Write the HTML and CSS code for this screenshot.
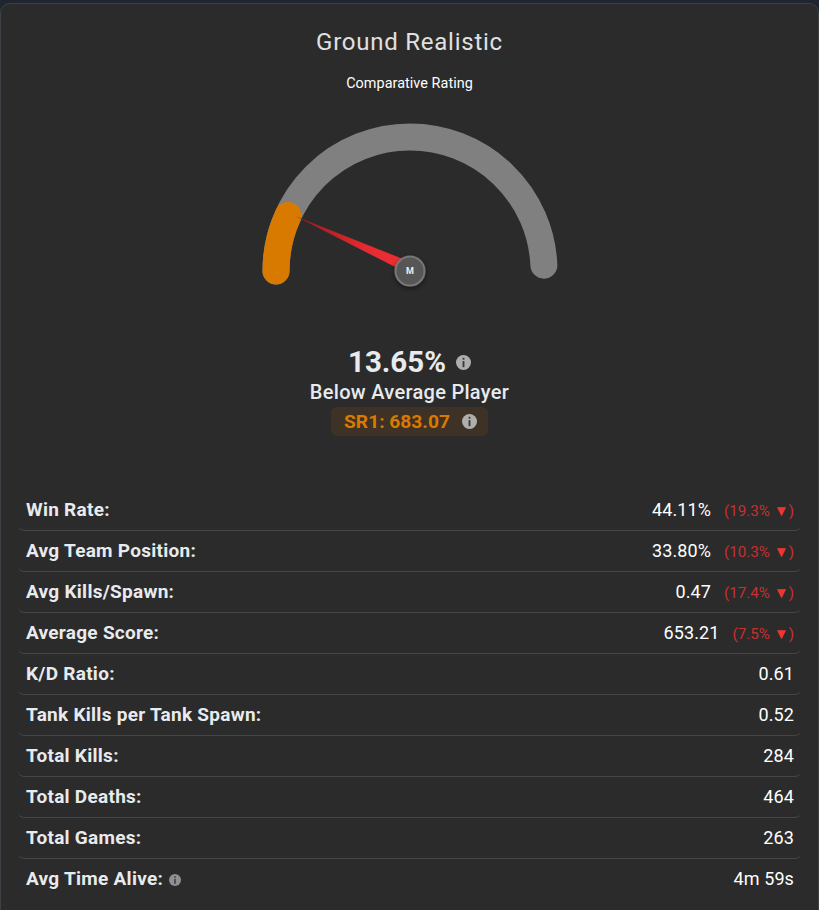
FILE: index.html
```html
<!DOCTYPE html>
<html lang="en">
<head>
    <meta charset="UTF-8">
    <meta name="viewport" content="width=device-width, initial-scale=1.0">
    <title>Ground Realistic</title>
    <link rel="stylesheet" href="styles.css">
</head>
<body>

<div class="card">
    <h2 class="title">Ground Realistic</h2>
    <div class="subtitle">Comparative Rating</div>

    <svg class="gauge" width="320" height="180" viewBox="250 115 320 180">
        <defs>
            <linearGradient id="needleFill" gradientUnits="userSpaceOnUse" x1="295" y1="216" x2="410" y2="271">
                <stop offset="0" stop-color="#8f1a1c"/>
                <stop offset="0.6" stop-color="#e52a30"/>
                <stop offset="1" stop-color="#f03035"/>
            </linearGradient>
            <filter id="hubShadow" x="-50%" y="-50%" width="200%" height="200%">
                <feDropShadow dx="0" dy="2" stdDeviation="2.5" flood-color="#000" flood-opacity="0.5"/>
            </filter>
        </defs>
        <path class="track" d="M276 271 A134 134 0 0 1 410 137 A134 134 0 0 1 543.87 265.15"/>
        <path class="value" d="M276 271 A134 134 0 0 1 288 215.5"/>
        <polygon fill="url(#needleFill)" points="295,216 413,263 406,272.5"/>
        <circle class="hub" cx="410" cy="271" r="14.5" filter="url(#hubShadow)"/>
        <text class="hub-label" x="410" y="274" text-anchor="middle">M</text>
    </svg>

    <div class="score">
        <span>13.65%</span>
        <svg class="info info-lg" viewBox="0 0 16 16"><circle cx="8" cy="8" r="8"/><rect x="7" y="3" width="2" height="2"/><rect x="7" y="6.5" width="2" height="6.5"/></svg>
    </div>
    <div class="label">Below Average Player</div>
    <div class="sr-wrap">
        <div class="sr">
            <span>SR1: 683.07</span>
            <svg class="info info-lg" viewBox="0 0 16 16"><circle cx="8" cy="8" r="8"/><rect x="7" y="3" width="2" height="2"/><rect x="7" y="6.5" width="2" height="6.5"/></svg>
        </div>
    </div>

    <div class="stats">
        <div class="row">
            <span class="name">Win Rate:</span>
            <span class="val">44.11%<span class="diff">(19.3% <span class="arrow">▼</span>)</span></span>
        </div>
        <div class="row">
            <span class="name">Avg Team Position:</span>
            <span class="val">33.80%<span class="diff">(10.3% <span class="arrow">▼</span>)</span></span>
        </div>
        <div class="row">
            <span class="name">Avg Kills/Spawn:</span>
            <span class="val">0.47<span class="diff">(17.4% <span class="arrow">▼</span>)</span></span>
        </div>
        <div class="row">
            <span class="name">Average Score:</span>
            <span class="val">653.21<span class="diff">(7.5% <span class="arrow">▼</span>)</span></span>
        </div>
        <div class="row">
            <span class="name">K/D Ratio:</span>
            <span class="val">0.61</span>
        </div>
        <div class="row">
            <span class="name">Tank Kills per Tank Spawn:</span>
            <span class="val">0.52</span>
        </div>
        <div class="row">
            <span class="name">Total Kills:</span>
            <span class="val">284</span>
        </div>
        <div class="row">
            <span class="name">Total Deaths:</span>
            <span class="val">464</span>
        </div>
        <div class="row">
            <span class="name">Total Games:</span>
            <span class="val">263</span>
        </div>
        <div class="row">
            <span class="name">Avg Time Alive:
                <svg class="info info-sm" viewBox="0 0 16 16"><circle cx="8" cy="8" r="8"/><rect x="7" y="3" width="2" height="2"/><rect x="7" y="6.5" width="2" height="6.5"/></svg>
            </span>
            <span class="val">4m 59s</span>
        </div>
    </div>
</div>

</body>
</html>
```

FILE: styles.css
```css
html, body {
    height: 100%;
}

body {
    margin: 0;
    padding-top: 3px;
    box-sizing: border-box;
    overflow: hidden;
    background-color: #1f2630;
    font-family: 'Roboto', sans-serif;
    color: #e8eaed;
}

.card {
    height: 920px;
    box-sizing: border-box;
    padding: 0 17px;
    background-color: #2b2b2b;
    border: 1px solid #3d4145;
    border-radius: 10px;
    text-align: center;
}

.title {
    margin: 0;
    padding-top: 22px;
    font-size: 24px;
    font-weight: 400;
    line-height: 32px;
    letter-spacing: 0.75px;
    color: #e0e0e0;
}

.subtitle {
    margin-top: 16px;
    font-size: 14.4px;
    letter-spacing: 0.05px;
    line-height: 20px;
    color: #fff;
}

.gauge {
    display: block;
    margin: 21px auto 0;
}

.track, .value {
    fill: none;
    stroke-width: 27;
    stroke-linecap: round;
}

.track {
    stroke: #808080;
}

.value {
    stroke: #d97a00;
}

.hub {
    fill: #565656;
    stroke: #777;
    stroke-width: 2;
}

.hub-label {
    font-family: 'Roboto', sans-serif;
    font-size: 9px;
    font-weight: 700;
    fill: #f0f0f0;
}

.score {
    display: flex;
    justify-content: center;
    align-items: center;
    gap: 10px;
    margin-top: 51px;
    font-size: 29.5px;
    font-weight: 700;
    line-height: 33px;
    color: #e8eaed;
}

.label {
    font-size: 20px;
    font-weight: 500;
    letter-spacing: 0.3px;
    line-height: 26px;
    color: #e8eaed;
}

.sr-wrap {
    display: flex;
    justify-content: center;
    margin-top: 2px;
}

.sr {
    display: flex;
    align-items: center;
    gap: 12px;
    height: 29px;
    padding: 0 11px 0 13px;
    background-color: #3e3226;
    border-radius: 6px;
    font-size: 19.2px;
    font-weight: 700;
    color: #d97a00;
}

.info {
    display: inline-block;
}

.info circle {
    fill: #b0aeac;
}

.info rect {
    fill: #3a3a3a;
}

.info-lg {
    width: 15px;
    height: 15px;
}

.info-sm {
    width: 12px;
    height: 12px;
    margin-left: 1px;
    vertical-align: -1px;
}

.info-sm circle {
    fill: #8f8f96;
}

.stats {
    margin-top: 54px;
}

.row {
    display: flex;
    justify-content: space-between;
    align-items: center;
    height: 41px;
    box-sizing: border-box;
    padding: 0 7px 2px 8px;
    border-bottom: 1px solid #464646;
    border-radius: 0 0 6px 6px;
    font-size: 18px;
}

.row:last-child {
    border-bottom: none;
}

.name {
    font-size: 19px;
    font-weight: 700;
    letter-spacing: 0.27px;
    color: #e8eaed;
}

.val {
    letter-spacing: 0.1px;
    color: #fff;
}

.diff {
    margin-left: 13px;
    font-size: 15.2px;
    letter-spacing: 0;
    color: #c8302f;
}

.arrow {
    color: #f03530;
}
```
